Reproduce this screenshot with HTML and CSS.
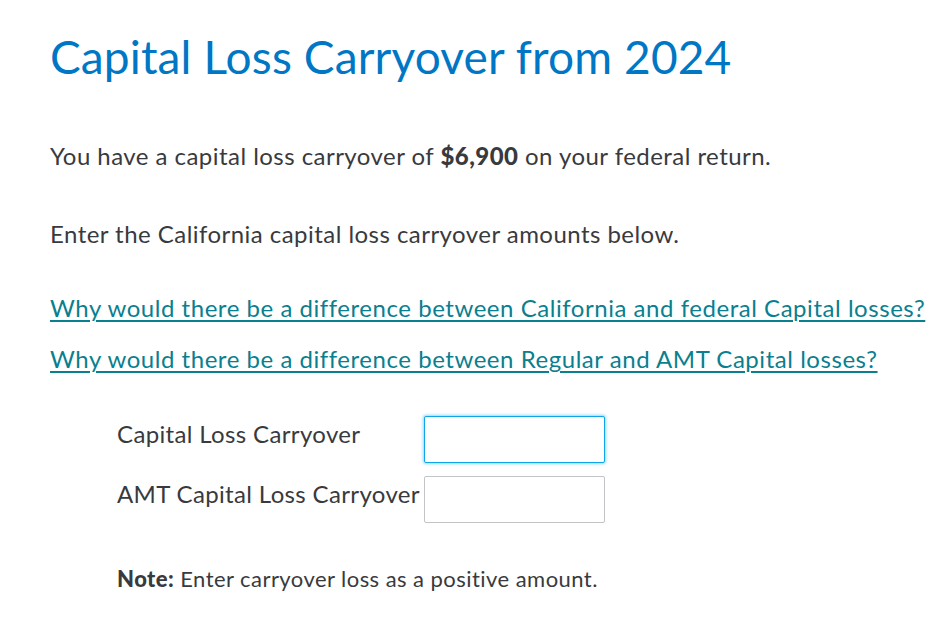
FILE: index.html
```html
<!DOCTYPE html>
<html lang="en">
<head>
<meta charset="utf-8">
<title>Capital Loss Carryover from 2024</title>
<link rel="stylesheet" href="styles.css">
</head>
<body>
<main class="page">
  <h1 class="title">Capital Loss Carryover from 2024</h1>
  <p class="text first">You have a capital loss carryover of <strong>$6,900</strong> on your federal return.</p>
  <p class="text second">Enter the California capital loss carryover amounts below.</p>
  <a class="link first-link" href="#">Why would there be a difference between California and federal Capital losses?</a>
  <a class="link" href="#">Why would there be a difference between Regular and AMT Capital losses?</a>
  <div class="form">
    <label class="label" for="cl">Capital Loss Carryover</label>
    <input class="field focused" id="cl" type="text">
    <label class="label" for="amt">AMT Capital Loss Carryover</label>
    <input class="field" id="amt" type="text">
  </div>
  <p class="note"><strong>Note:</strong> Enter carryover loss as a positive amount.</p>
</main>
</body>
</html>
```
FILE: styles.css
```css
html, body {
  margin: 0;
  padding: 0;
  background: #ffffff;
}
body {
  font-family: "Lato", "Noto Sans", sans-serif;
  color: #393a3d;
}
.page {
  padding: 25px 0 0 50px;
}
.title {
  margin: 0;
  font-size: 46px;
  font-weight: 400;
  line-height: 64px;
  color: #0077c5;
  letter-spacing: 0.14px;
}
.text {
  margin: 0;
  font-size: 24px;
  line-height: 32px;
  letter-spacing: 0.46px;
}
.text.first {
  margin-top: 51px;
}
.text.second {
  margin-top: 46px;
}
.text strong {
  font-weight: 900;
}
.link {
  display: block;
  width: max-content;
  font-size: 24px;
  line-height: 32px;
  letter-spacing: 0.54px;
  color: #0a7f8f;
  text-decoration: underline;
  text-underline-offset: 3px;
  text-decoration-thickness: 2px;
}
.link.first-link {
  margin-top: 42px;
}
.link + .link {
  margin-top: 19px;
}
.form {
  display: grid;
  grid-template-columns: 307px 181px;
  row-gap: 13px;
  align-items: start;
  margin: 41px 0 0 67px;
}
.label {
  padding-top: 2px;
  font-size: 24px;
  line-height: 32px;
  letter-spacing: 0.35px;
  white-space: nowrap;
}
.field {
  box-sizing: border-box;
  width: 181px;
  height: 47px;
  margin: 0;
  border: 1px solid #c2c4c7;
  border-radius: 2px;
  font: inherit;
  background: #fff;
}
.field.focused {
  border-color: #0ea5e9;
  box-shadow: 0 0 3px 1px rgba(14, 165, 233, 0.45);
}
.field:focus {
  outline: none;
}
.note {
  margin: 41px 0 0 67px;
  font-size: 22px;
  line-height: 30px;
  letter-spacing: 0.45px;
}
.note strong {
  font-weight: 900;
}
```
